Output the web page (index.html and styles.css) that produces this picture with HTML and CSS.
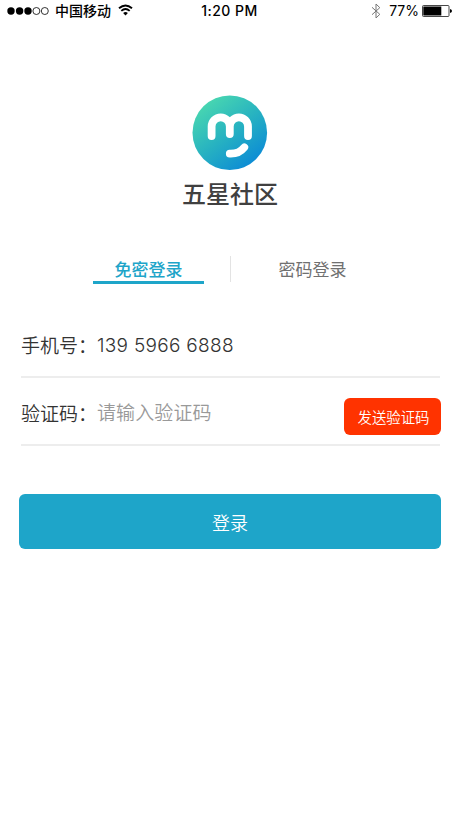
FILE: index.html
```html
<!DOCTYPE html>
<html lang="zh-CN">
<head>
    <meta charset="UTF-8">
    <meta name="viewport" content="width=device-width, initial-scale=1.0">
    <title>五星社区 - 登录</title>
    <link rel="stylesheet" href="styles.css">
</head>
<body>
    <header class="status-bar">
        <div class="status-left">
            <svg class="signal" width="42" height="10" viewBox="0 0 42 10">
                <circle cx="4" cy="5" r="3.7"/>
                <circle cx="12.6" cy="5" r="3.7"/>
                <circle cx="21" cy="5" r="3.7"/>
                <circle class="empty" cx="29.4" cy="5" r="3.5"/>
                <circle class="empty" cx="37.8" cy="5" r="3.5"/>
            </svg>
            <span class="carrier">中国移动</span>
            <svg class="wifi" width="15" height="12" viewBox="0 0 15 12">
                <path d="M1 4.2Q7.5 -1.4 14 4.2"/>
                <path d="M3.3 6.9Q7.5 3.3 11.7 6.9"/>
                <path class="dot" d="M5.1 8.9Q7.5 7 9.9 8.9L7.5 11.5Z"/>
            </svg>
        </div>
        <span class="clock">1:20 PM</span>
        <div class="status-right">
            <svg class="bluetooth" width="10" height="16" viewBox="0 0 10 16">
                <path d="M1 4.3L8.8 11.3L5 15V1L8.8 4.7L1 11.7"/>
            </svg>
            <span class="percent">77%</span>
            <svg class="battery" width="30" height="12" viewBox="0 0 30 12">
                <rect class="shell" x="0.5" y="0.5" width="26.5" height="11" rx="1"/>
                <rect x="1.3" y="1.5" width="18" height="9"/>
                <path d="M28 4Q30 4.3 30 6Q30 7.7 28 8Z"/>
            </svg>
        </div>
    </header>

    <div class="brand">
        <svg class="logo" width="76" height="75" viewBox="0 0 76 75">
            <defs>
                <linearGradient id="logoBg" x1="0.15" y1="0.1" x2="0.8" y2="0.95">
                    <stop offset="0" stop-color="#49d7b0"/>
                    <stop offset="0.5" stop-color="#27b2c1"/>
                    <stop offset="1" stop-color="#0b8ad6"/>
                </linearGradient>
            </defs>
            <circle cx="37.8" cy="37.7" r="37.3" fill="url(#logoBg)"/>
            <path d="M19.6 41V31.5A9.1 9.1 0 0 1 37.8 31.5V39M37.8 31.5A9.1 9.1 0 0 1 56 31.5V41"/>
            <path d="M37.8 58.6Q47 59 52.3 52.3"/>
        </svg>
        <h1>五星社区</h1>
    </div>

    <nav class="tabs">
        <a class="tab active">免密登录</a>
        <a class="tab">密码登录</a>
    </nav>

    <form class="login-form">
        <div class="field">
            <label for="phone">手机号：</label>
            <input type="text" id="phone" value="139 5966 6888">
        </div>
        <div class="field">
            <label for="code">验证码：</label>
            <input type="text" id="code" placeholder="请输入验证码">
            <button type="button" class="send-code">发送验证码</button>
        </div>
        <button type="submit" class="submit">登录</button>
    </form>
</body>
</html>
```
FILE: styles.css
```css
* {
    box-sizing: border-box;
}

body {
    margin: 0;
    min-height: 818px;
    background-color: #fff;
    color: #333;
    font-family: "Inter", "Noto Sans CJK SC", sans-serif;
}

input, button {
    font-family: "Inter", "Noto Sans CJK SC", sans-serif;
    border: none;
    padding: 0;
}

/* status bar */
.status-bar {
    display: grid;
    grid-template-columns: 1fr auto 1fr;
    align-items: center;
    height: 22px;
    padding: 0 8px 0 7px;
    color: #000;
    font-size: 14px;
    line-height: 22px;
}

.status-left, .status-right {
    display: flex;
    align-items: center;
}

.status-right {
    justify-content: flex-end;
}

.signal .empty {
    fill: none;
    stroke: #000;
    stroke-width: 0.8;
}

.carrier {
    margin: 0 7px 0 6px;
    font-weight: 500;
}

.wifi {
    margin-top: -2px;
}

.wifi path {
    fill: none;
    stroke: #000;
    stroke-width: 1.9;
}

.wifi .dot {
    fill: #000;
    stroke: none;
}

.clock {
    font-weight: 500;
    letter-spacing: 0.5px;
}

.bluetooth {
    fill: none;
    stroke: #777;
    stroke-width: 1;
    margin-right: 8px;
}

.percent {
    margin-right: 3px;
}

.battery .shell {
    fill: none;
    stroke: #333;
    stroke-width: 0.9;
}

/* logo and name */
.brand {
    display: flex;
    flex-direction: column;
    align-items: center;
    padding-top: 73px;
}

.logo {
    fill: none;
    stroke: #fff;
    stroke-width: 7.8;
    stroke-linecap: round;
    stroke-linejoin: round;
}

.logo circle {
    stroke: none;
}

.brand h1 {
    margin: 7px 0 0;
    font-size: 24px;
    font-weight: 500;
    line-height: 36px;
    color: #404040;
}

/* tabs */
.tabs {
    display: flex;
    justify-content: center;
    margin-top: 40px;
}

.tab {
    width: 111px;
    height: 31px;
    font-size: 17px;
    line-height: 34px;
    text-align: center;
    color: #707070;
}

.tab.active {
    color: #1ea5c9;
    font-weight: 500;
    border-bottom: 3px solid #1ea5c9;
}

.tab + .tab {
    width: 164px;
    height: 26px;
    margin: 3px -27px 0 26px;
    line-height: 28px;
    border-left: 1px solid #e3e3e3;
}

/* form */
.login-form {
    padding: 26px 19px 0;
}

.field {
    display: flex;
    align-items: center;
    height: 68px;
    margin: 0 1px 0 2px;
    border-bottom: 2px solid #ededed;
}

.field label {
    width: 76px;
    padding-top: 2px;
    font-size: 19px;
    font-weight: 350;
    white-space: nowrap;
}

.field input {
    flex: 1;
    min-width: 0;
    height: 40px;
    padding-top: 4px;
    font-size: 19px;
    font-weight: 350;
    letter-spacing: 0.3px;
    color: #333;
    background: none;
    outline: none;
}

.field input::placeholder {
    color: #999;
    letter-spacing: 0.1px;
}

.send-code {
    width: 97px;
    height: 37px;
    margin: 10px -1px 0 0;
    padding-left: 2px;
    border-radius: 6px;
    background-color: #ff3300;
    color: #fff;
    font-size: 14.4px;
    font-weight: 350;
}

.submit {
    display: block;
    width: 100%;
    height: 55px;
    margin-top: 48px;
    border-radius: 6px;
    background-color: #1ea5c9;
    color: #fff;
    font-size: 18px;
    font-weight: 350;
}
```
